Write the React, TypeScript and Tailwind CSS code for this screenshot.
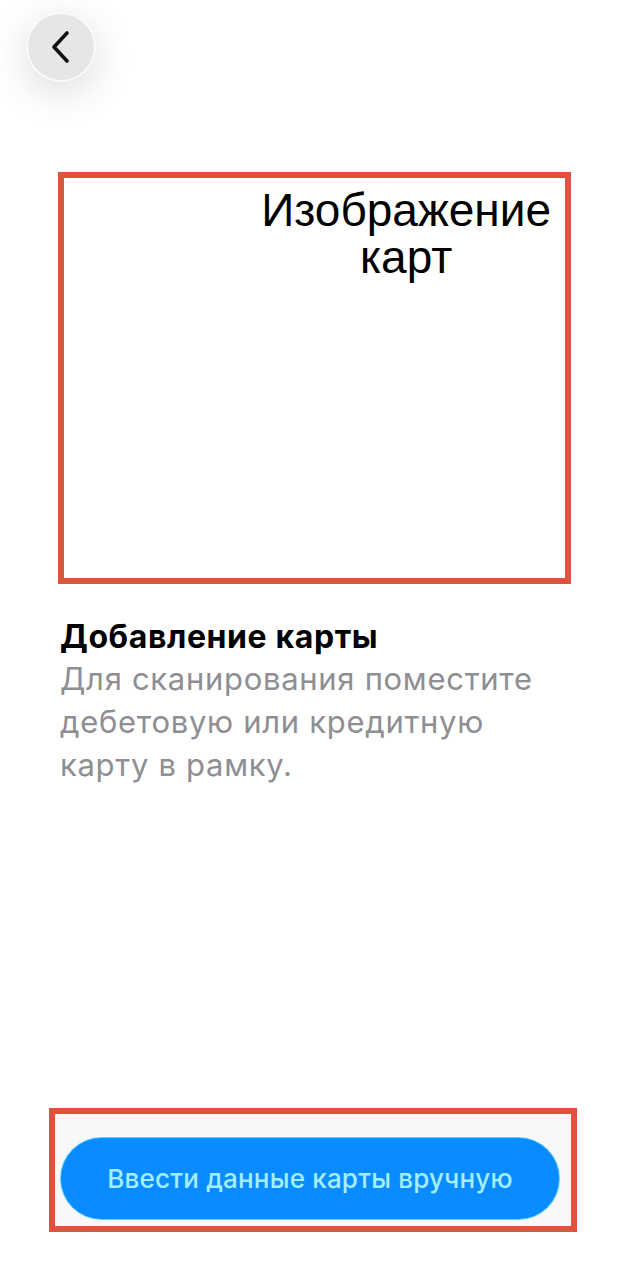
import React, {FC} from 'react';

const BackButton: FC = () => (
  <button
    type="button"
    aria-label="Назад"
    className="ml-[26px] mt-[12px] w-[70px] h-[70px] rounded-full bg-[#e6e6e6] border-2 border-white/80 shadow-[0_10px_40px_rgba(0,0,0,0.14)] flex items-center justify-center"
  >
    <svg width="22" height="34" viewBox="0 0 22 34" fill="none">
      <path d="M17 3L4 17L17 31" stroke="#111" strokeWidth="3.6" strokeLinecap="round" strokeLinejoin="round" />
    </svg>
  </button>
);

const CardFrame: FC = () => (
  <div className="ml-[58px] mt-[90px] w-[513px] h-[412px] border-[6px] border-[#e0513f] flex justify-end pr-[14px] pt-[9px]">
    <p className="font-['Liberation_Sans',Arial,sans-serif] text-[46px] leading-[47px] text-black text-center">
      Изображение
      <br />
      карт
    </p>
  </div>
);

export default function App() {
  return (
    <div className="min-h-[1280px] w-full bg-white flex flex-col font-['Inter','Noto_Sans',sans-serif]">
      <BackButton />
      <CardFrame />

      <section className="ml-[60px] mt-[33px] pr-[30px]">
        <h1 className="text-[32px] leading-[40px] font-bold text-black tracking-[0.6px]">Добавление карты</h1>
        <p className="text-[31px] leading-[43px] text-[#8e8e93] tracking-[0.7px]">
          Для сканирования поместите
          <br />
          дебетовую или кредитную
          <br />
          карту в рамку.
        </p>
      </section>

      <div className="flex-1" />

      <div className="ml-[49px] mb-[48px] w-[528px] h-[124px] border-[6px] border-[#e0513f] bg-[#f8f8f8] flex items-start pt-[24px] pl-[6px] pr-[12px]">
        <button
          type="button"
          className="w-[498px] h-[81px] rounded-full bg-[#0a8bff] shadow-[0_0_0_1px_#5fd0ff] text-[#a3effd] text-[26px] font-medium tracking-[0.2px]"
        >
          Ввести данные карты вручную
        </button>
      </div>
    </div>
  );
}
